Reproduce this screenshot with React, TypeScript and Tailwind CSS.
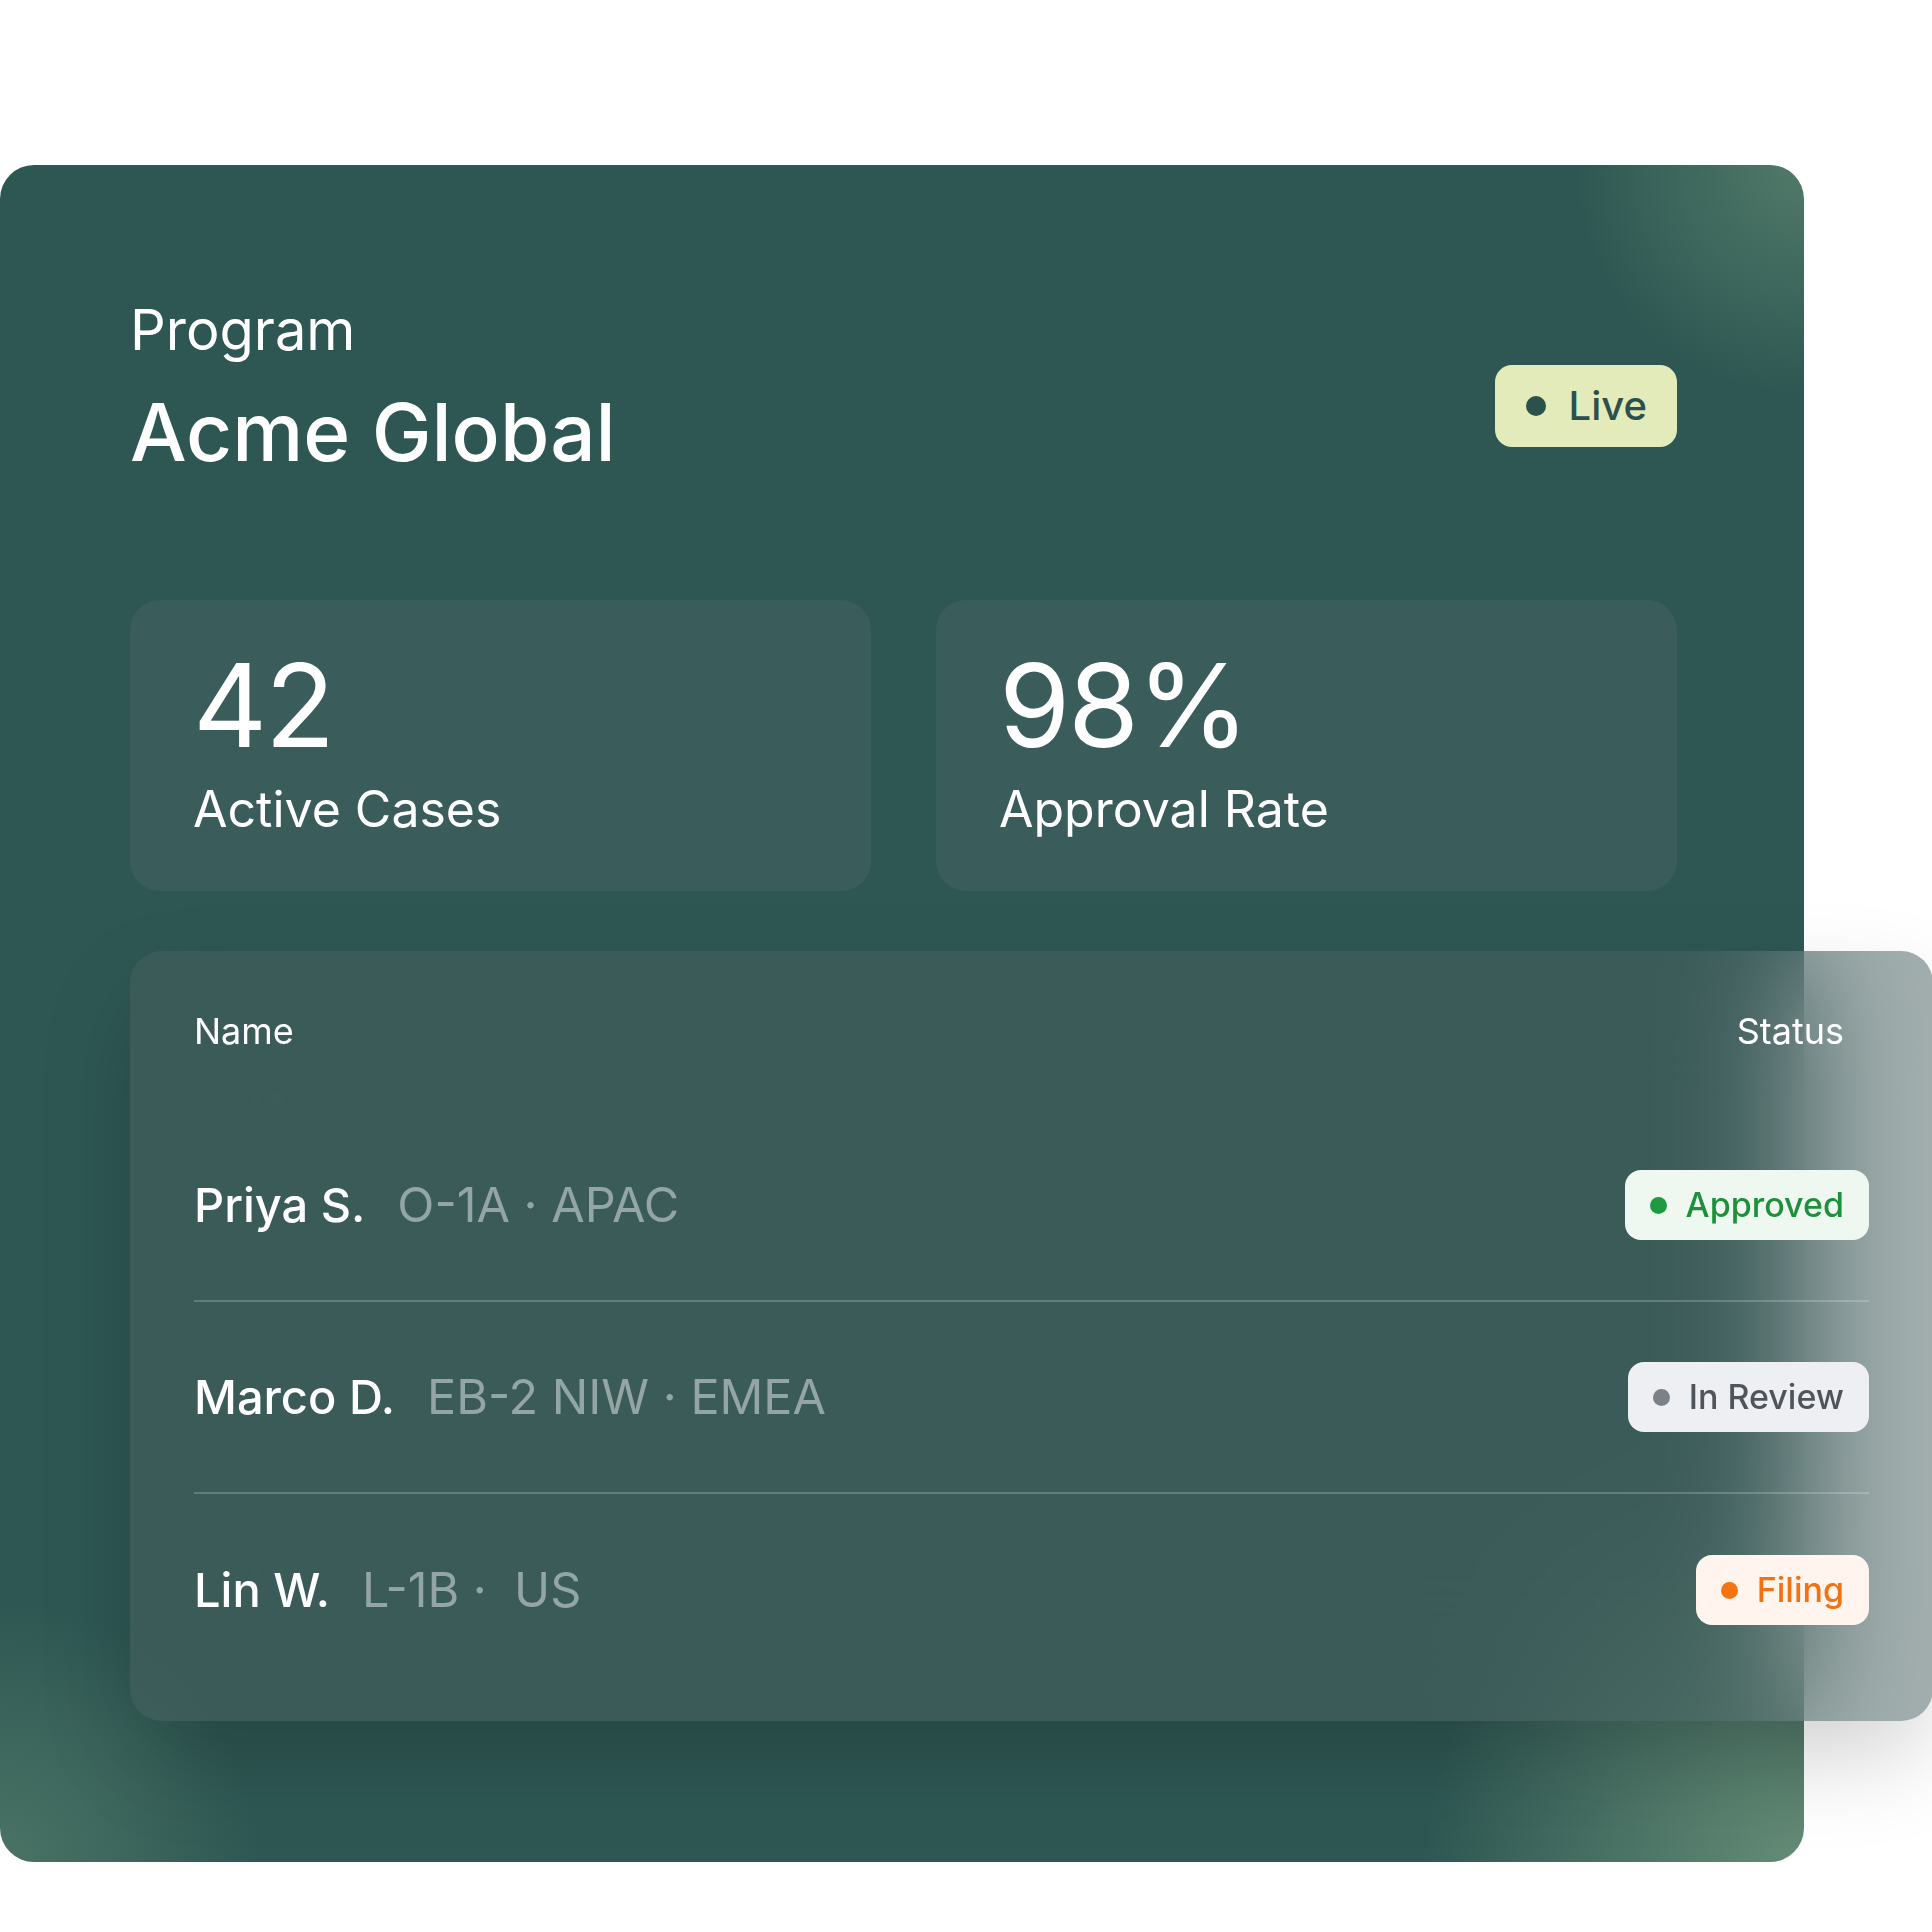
import React from 'react';

type Status = 'approved' | 'review' | 'filing';

interface Row {
  name: string;
  meta: string;
  status: Status;
}

const ROWS: Row[] = [
  { name: 'Priya S.', meta: 'O-1A · APAC', status: 'approved' },
  { name: 'Marco D.', meta: 'EB-2 NIW · EMEA', status: 'review' },
  { name: 'Lin W.', meta: 'L-1B ·\u00a0 US', status: 'filing' },
];

const BADGES: Record<Status, { label: string; box: string; dot: string; text: string }> = {
  approved: { label: 'Approved', box: 'bg-[#eff8f0]', dot: 'bg-[#1f9a40]', text: 'text-[#1e8f3a]' },
  review: { label: 'In Review', box: 'bg-[#eeeff3]', dot: 'bg-[#7c8087]', text: 'text-[#50555c]' },
  filing: { label: 'Filing', box: 'bg-[#fff4ee]', dot: 'bg-[#f57412]', text: 'text-[#f27212]' },
};

function StatusBadge({ status }: { status: Status }) {
  const b = BADGES[status];
  return (
    <div className={`flex items-center gap-[19px] h-[70px] pl-[25px] pr-[25px] rounded-[16px] ${b.box}`}>
      <span className={`w-[17px] h-[17px] rounded-full ${b.dot}`} />
      <span className={`text-[34px] leading-none font-medium ${b.text}`}>{b.label}</span>
    </div>
  );
}

function StatCard({ value, label }: { value: string; label: string }) {
  return (
    <div className="h-[291px] rounded-[30px] bg-[#3a5c5a] pl-[63px] pt-[48px]">
      <div className="text-[115px] leading-[115px] font-normal tracking-[-0.02em] text-white">{value}</div>
      <div className="mt-[16px] text-[50px] leading-[60px] text-white">{label}</div>
    </div>
  );
}

export default function App() {
  return (
    <div className="w-[1932px] h-[1932px] bg-white overflow-hidden font-['Inter','Noto_Sans',sans-serif]">
      <div className="pt-[165px]">
        <div
          className="relative w-[1804px] h-[1697px] rounded-[34px] pl-[130px] pr-[127px] pt-[132px]"
          style={{
            background:
              'radial-gradient(circle at 100% 0%, rgba(104,145,120,0.6), rgba(104,145,120,0) 230px), radial-gradient(circle at 100% 100%, rgba(120,158,130,0.75), rgba(120,158,130,0) 380px), radial-gradient(circle at 0% 100%, rgba(110,150,125,0.45), rgba(110,150,125,0) 260px), #2e5753',
          }}
        >
          {/* header */}
          <div className="flex items-start justify-between">
            <div>
              <div className="text-[56px] leading-[66px] text-white">Program</div>
              <div className="mt-[20px] text-[80px] leading-[98px] font-medium text-white">Acme Global</div>
            </div>
            <div className="mt-[68px] h-[82px] flex items-center gap-[23px] pl-[31px] pr-[30px] rounded-[17px] bg-[#e2ebb9]">
              <span className="w-[20px] h-[20px] rounded-full bg-[#2b514c]" />
              <span className="text-[40px] leading-none font-medium text-[#2b514c]">Live</span>
            </div>
          </div>

          {/* stats */}
          <div className="mt-[119px] grid grid-cols-2 gap-[65px]">
            <StatCard value="42" label="Active Cases" />
            <StatCard value="98%" label="Approval Rate" />
          </div>

          {/* cases table */}
          <div className="mt-[60px] mr-[-256px] h-[770px] rounded-[32px] bg-[rgba(72,97,97,0.51)] backdrop-blur-3xl shadow-[0_40px_100px_-10px_rgba(0,0,0,0.2)] pl-[64px] pr-[64px] pt-[58px] pb-[35px]">
            <div className="flex justify-between text-[36px] leading-[44px] text-white">
              <span>Name</span>
              <span className="pr-[25px]">Status</span>
            </div>
            <div className="mt-[57px]">
              {ROWS.map((r, i) => (
                <div
                  key={r.name}
                  className={`h-[192px] flex items-center justify-between ${
                    i < ROWS.length - 1 ? 'border-b-2 border-white/20' : ''
                  }`}
                >
                  <div className="flex items-baseline leading-none">
                    <span className="text-[47px] font-medium text-white">{r.name}</span>
                    <span className="ml-[32px] text-[48.5px] text-[#93a5a4]">{r.meta}</span>
                  </div>
                  <StatusBadge status={r.status} />
                </div>
              ))}
            </div>
          </div>
        </div>
      </div>
    </div>
  );
}
